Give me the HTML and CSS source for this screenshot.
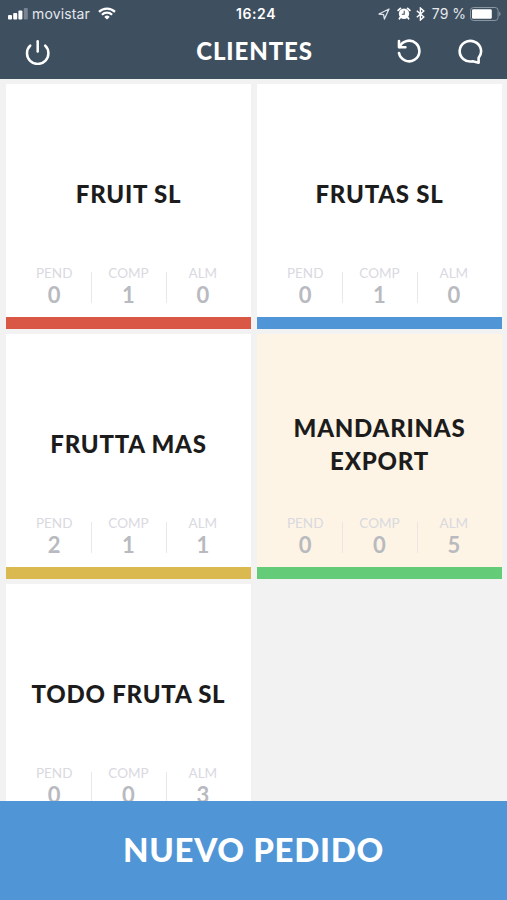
FILE: index.html
```html
<!DOCTYPE html>
<html lang="es">
<head>
    <meta charset="UTF-8">
    <meta name="viewport" content="width=device-width, initial-scale=1.0">
    <title>Clientes</title>
    <link rel="stylesheet" href="styles.css">
</head>
<body>
    <div class="app">
        <header class="header">
            <div class="status-bar">
                <div class="status-left">
                    <svg class="signal" width="20" height="12" viewBox="0 0 20 12" fill="#fff">
                        <rect x="0" y="7" width="4" height="4.5" rx="1"/>
                        <rect x="5.2" y="5" width="4" height="6.5" rx="1"/>
                        <rect x="10.4" y="2.5" width="4" height="9" rx="1"/>
                        <rect x="15.8" y="0" width="4" height="11.5" rx="1" opacity=".3"/>
                    </svg>
                    <span class="carrier">movistar</span>
                    <svg class="wifi" width="18" height="13" viewBox="0 0 18 13" fill="none" stroke="#fff" stroke-width="2.2">
                        <path d="M1 4.9a11.3 11.3 0 0 1 16 0"/>
                        <path d="M3.9 7.8a7.2 7.2 0 0 1 10.2 0"/>
                        <path d="M9 12.6L6.3 9.9a3.8 3.8 0 0 1 5.4 0z" fill="#fff" stroke="none"/>
                    </svg>
                </div>
                <span class="time">16:24</span>
                <div class="status-right">
                    <svg class="location" width="12" height="12" viewBox="0 0 12 12" fill="none" stroke="#dfe4e9" stroke-width="1.3" stroke-linejoin="round">
                        <path d="M11 1L1 6l4.6.6L6.4 11z"/>
                    </svg>
                    <svg class="alarm" width="14" height="13" viewBox="0 0 14 13">
                        <path d="M1.2 3.4L3.4 1.4M12.8 3.4L10.6 1.4M3.2 10.6L2.4 11.8M10.8 10.6L11.6 11.8" stroke="#fff" stroke-width="1.8" stroke-linecap="round"/>
                        <circle cx="7" cy="6.8" r="5.2" fill="#fff"/>
                        <path d="M7.2 3.8v3.4H4.8" fill="none" stroke="#3e4f60" stroke-width="1.1"/>
                    </svg>
                    <svg class="bluetooth" width="9" height="14" viewBox="0 0 9 14" fill="none" stroke="#fff" stroke-width="1.4">
                        <path d="M.8 3.8l7 6.2-3.4 3V1l3.4 3-7 6.2"/>
                    </svg>
                    <span class="percent">79 %</span>
                    <svg class="battery" width="31" height="14" viewBox="0 0 31 14">
                        <rect x=".5" y=".5" width="27.6" height="13" rx="3" fill="none" stroke="#8b96a1" stroke-width="1"/>
                        <rect x="2" y="2.2" width="19.8" height="9.6" rx="1.2" fill="#fff"/>
                        <path d="M29.2 4.8v4.4c1.8-.6 1.8-3.8 0-4.4z" fill="#8b96a1"/>
                    </svg>
                </div>
            </div>
            <div class="nav-bar">
                <button class="icon-btn">
                    <svg width="26" height="26" viewBox="0 0 26 26" fill="none" stroke="#fff" stroke-width="2.5" stroke-linecap="round">
                        <path d="M12.7 2.2v10.4"/>
                        <path d="M5.2 6.6a10.7 10.7 0 1 0 15 0"/>
                    </svg>
                </button>
                <h1>CLIENTES</h1>
                <div class="nav-actions">
                    <button class="icon-btn">
                        <svg width="26" height="26" viewBox="0 0 26 26" fill="none" stroke="#fff" stroke-width="2.6" stroke-linecap="round" stroke-linejoin="round">
                            <path d="M3 2v6.2h6.4"/>
                            <path d="M3.6 8A10.3 10.3 0 1 1 3 14"/>
                        </svg>
                    </button>
                    <button class="icon-btn">
                        <svg width="26" height="26" viewBox="0 0 26 26" fill="none" stroke="#fff" stroke-width="2.6" stroke-linejoin="round">
                            <path d="M20.6 23.8V18.8A10.7 10.3 0 1 0 14.6 22.3z"/>
                        </svg>
                    </button>
                </div>
            </div>
        </header>

        <main class="clients">
            <div class="card red">
                <h2>FRUIT SL</h2>
                <div class="stats">
                    <div class="stat"><span>PEND</span><b>0</b></div>
                    <div class="stat"><span>COMP</span><b>1</b></div>
                    <div class="stat"><span>ALM</span><b>0</b></div>
                </div>
            </div>
            <div class="card blue">
                <h2>FRUTAS SL</h2>
                <div class="stats">
                    <div class="stat"><span>PEND</span><b>0</b></div>
                    <div class="stat"><span>COMP</span><b>1</b></div>
                    <div class="stat"><span>ALM</span><b>0</b></div>
                </div>
            </div>
            <div class="card yellow">
                <h2>FRUTTA MAS</h2>
                <div class="stats">
                    <div class="stat"><span>PEND</span><b>2</b></div>
                    <div class="stat"><span>COMP</span><b>1</b></div>
                    <div class="stat"><span>ALM</span><b>1</b></div>
                </div>
            </div>
            <div class="card green selected">
                <h2>MANDARINAS EXPORT</h2>
                <div class="stats">
                    <div class="stat"><span>PEND</span><b>0</b></div>
                    <div class="stat"><span>COMP</span><b>0</b></div>
                    <div class="stat"><span>ALM</span><b>5</b></div>
                </div>
            </div>
            <div class="card">
                <h2>TODO FRUTA SL</h2>
                <div class="stats">
                    <div class="stat"><span>PEND</span><b>0</b></div>
                    <div class="stat"><span>COMP</span><b>0</b></div>
                    <div class="stat"><span>ALM</span><b>3</b></div>
                </div>
            </div>
        </main>

        <button class="new-order">NUEVO PEDIDO</button>
    </div>
</body>
</html>
```
FILE: styles.css
```css
* {
    box-sizing: border-box;
}

body {
    margin: 0;
    background: #f2f2f2;
    font-family: Lato, "Liberation Sans", sans-serif;
}

button {
    border: none;
    padding: 0;
    background: none;
    font-family: inherit;
    cursor: pointer;
}

svg {
    display: block;
}

.app {
    display: flex;
    flex-direction: column;
    height: 100vh;
    overflow: hidden;
}

/* header */
.header {
    flex: none;
    height: 79px;
    background: #3e4f60;
    color: #fff;
}

.status-bar {
    display: grid;
    grid-template-columns: 1fr auto 1fr;
    align-items: center;
    height: 27px;
    padding: 0 6px 0 8px;
    font-family: Inter, "Liberation Sans", sans-serif;
    font-size: 14px;
}

.status-left,
.status-right {
    display: flex;
    align-items: center;
}

.status-right {
    justify-content: flex-end;
}

.carrier {
    margin: 0 8px 0 4px;
    color: #e4e8ec;
    letter-spacing: 0.15px;
}

.time {
    padding-left: 3px;
    font-weight: 600;
    letter-spacing: 0.6px;
}

.alarm {
    margin: 0 5px 0 7px;
}

.percent {
    margin: 0 4px 0 7px;
    color: #e4e8ec;
}

.nav-bar {
    display: grid;
    grid-template-columns: 1fr auto 1fr;
    align-items: center;
    height: 50px;
    padding: 0 23px 0 25px;
}

.nav-bar h1 {
    margin: 0 0 3px;
    font-size: 24px;
    font-weight: 900;
    letter-spacing: 0.9px;
}

.icon-btn {
    width: 26px;
    height: 26px;
}

.nav-actions {
    display: flex;
    justify-content: flex-end;
    gap: 36px;
}

/* client cards */
.clients {
    flex: 1;
    min-height: 0;
    overflow: hidden;
    display: grid;
    grid-template-columns: 245px 245px;
    grid-auto-rows: 245px;
    gap: 5px 6px;
    align-content: start;
    padding: 5px 5px 0 6px;
}

.card {
    display: grid;
    grid-template-rows: 1fr auto;
    padding: 0 11px 11px;
    background: #fff;
    border-bottom: 12px solid #ccc;
    text-align: center;
}

.card.red { border-color: #d95745; }
.card.blue { border-color: #5096d7; }
.card.yellow { border-color: #dab950; }
.card.green { border-color: #64cb78; }

.card.selected {
    background: #fdf4e5;
}

.card h2 {
    align-self: center;
    margin: 39px 0 0;
    color: #1c1c1c;
    font-size: 24px;
    font-weight: 900;
    line-height: 33px;
    letter-spacing: 0.75px;
}

.stats {
    display: grid;
    grid-template-columns: repeat(3, 1fr);
    height: 42px;
}

.stat {
    position: relative;
    display: flex;
    flex-direction: column;
    align-items: center;
}

.stat + .stat::before {
    content: "";
    position: absolute;
    left: 0;
    top: 8px;
    width: 1px;
    height: 31px;
    background: #e8e8ec;
}

.card.selected .stat::before {
    background: #ece5e0;
}

.stat span {
    color: #d9d9df;
    font-size: 13.5px;
    line-height: 18px;
}

.stat b {
    color: #b9babf;
    font-size: 22px;
    line-height: 26px;
}

.new-order {
    flex: none;
    height: 99px;
    padding-bottom: 4px;
    background: #5096d7;
    color: #fff;
    font-size: 33px;
    font-weight: 900;
    letter-spacing: 0.7px;
}
```
